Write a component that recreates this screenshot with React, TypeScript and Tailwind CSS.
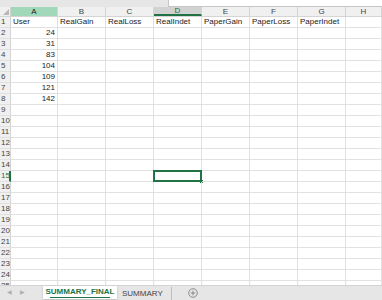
import React from "react";

const cols = ["A", "B", "C", "D", "E", "F", "G", "H"];
const widths = [47, 48, 48, 48, 48, 48, 48, 36];
const header = ["User", "RealGain", "RealLoss", "RealIndet", "PaperGain", "PaperLoss", "PaperIndet", ""];
const nums = [24, 31, 83, 104, 109, 121, 142];

export default function App() {
  const rows = Array.from({ length: 25 }, (_, i) => i + 1);
  return (
    <div
      className="w-[382px] h-[300px] overflow-hidden bg-white flex flex-col text-[8px] text-[#222]"
      style={{ fontFamily: '"Liberation Sans", Arial, sans-serif' }}
    >
      {/* formula strip */}
      <div className="h-[7px] flex shrink-0 bg-[#e6e6e6]">
        <div className="w-[168px]" />
        <div className="flex-1 bg-white border-l border-b border-[#c6c6c6]" />
      </div>
      {/* column header */}
      <div className="h-[10px] flex shrink-0 bg-[#f0f0f0] border-b border-[#d4d4d4]">
        <div className="w-[11px] shrink-0 border-r border-[#d4d4d4] relative">
          <div className="absolute right-[1px] bottom-[1px] w-0 h-0 border-l-[6px] border-l-transparent border-b-[6px] border-b-[#b8b8b8]" />
        </div>
        {cols.map((c, i) => (
          <div
            key={c}
            style={{ width: widths[i] }}
            className={
              "shrink-0 flex items-center justify-center leading-none border-r border-[#d4d4d4] " +
              (c === "A"
                ? "bg-[#a0d8b9] text-[#222]"
                : c === "D"
                ? "bg-[#d2d2d2] text-[#217346] border-b-2 border-b-[#217346]"
                : "text-[#444]")
            }
          >
            {c}
          </div>
        ))}
      </div>
      {/* rows */}
      <div className="flex-1 overflow-hidden">
        {rows.map((r) => (
          <div key={r} className="h-[11px] flex">
            <div
              className={
                "w-[11px] shrink-0 bg-[#f0f0f0] border-b border-[#e0e0e0] flex items-center pl-[1px] leading-none text-[#444] " +
                (r === 15 ? "border-r-2 border-r-[#217346] bg-[#d2d2d2] text-[#217346]" : "border-r border-r-[#d4d4d4]")
              }
            >
              {r}
            </div>
            {cols.map((c, i) => {
              let content: React.ReactNode = null;
              let align = "justify-start pl-[2px]";
              if (r === 1) content = header[i];
              if (c === "A" && r >= 2 && r <= 8) {
                content = nums[r - 2];
                align = "justify-end pr-[2px]";
              }
              const selected = r === 15 && c === "D";
              return (
                <div
                  key={c}
                  style={{ width: widths[i] }}
                  className={
                    "shrink-0 flex items-center leading-none border-r border-b border-[#e1e1e1] relative " + align
                  }
                >
                  {content}
                  {selected && (
                    <>
                      <div className="absolute left-[-1px] top-[-1px] w-[49px] h-[12px] border-2 border-[#217346]" />
                      <div className="absolute right-[-2px] bottom-[-2px] w-[3px] h-[3px] bg-[#217346]" />
                    </>
                  )}
                </div>
              );
            })}
          </div>
        ))}
      </div>
      {/* tab bar */}
      <div className="h-[15px] shrink-0 bg-[#e6e6e6] flex items-start border-t border-[#d4d4d4]">
        <div className="w-[43px] flex items-center gap-[8px] pl-[7px] h-[13px] text-[#b0b0b0] text-[6px]">
          <span>◀</span>
          <span>▶</span>
        </div>
        <div className="w-[74px] h-[13px] bg-white flex flex-col items-center justify-center shadow-[0_1px_2px_rgba(0,0,0,0.2)]">
          <span className="text-[#217346] font-bold text-[8px] leading-none">SUMMARY_FINAL</span>
          <div className="w-[60px] h-[1px] bg-[#217346] mt-[1px]" />
        </div>
        <div className="h-[13px] flex items-center pl-[5px] pr-[8px] text-[#444] text-[8px] border-r border-[#bdbdbd] my-[1px]">
          SUMMARY
        </div>
        <div className="h-[13px] flex items-center pl-[16px]">
          <svg width="10" height="10" viewBox="0 0 10 10">
            <circle cx="5" cy="5" r="4.3" fill="none" stroke="#777" strokeWidth="0.8" />
            <path d="M5 2.6v4.8M2.6 5h4.8" stroke="#777" strokeWidth="0.8" />
          </svg>
        </div>
      </div>
    </div>
  );
}
